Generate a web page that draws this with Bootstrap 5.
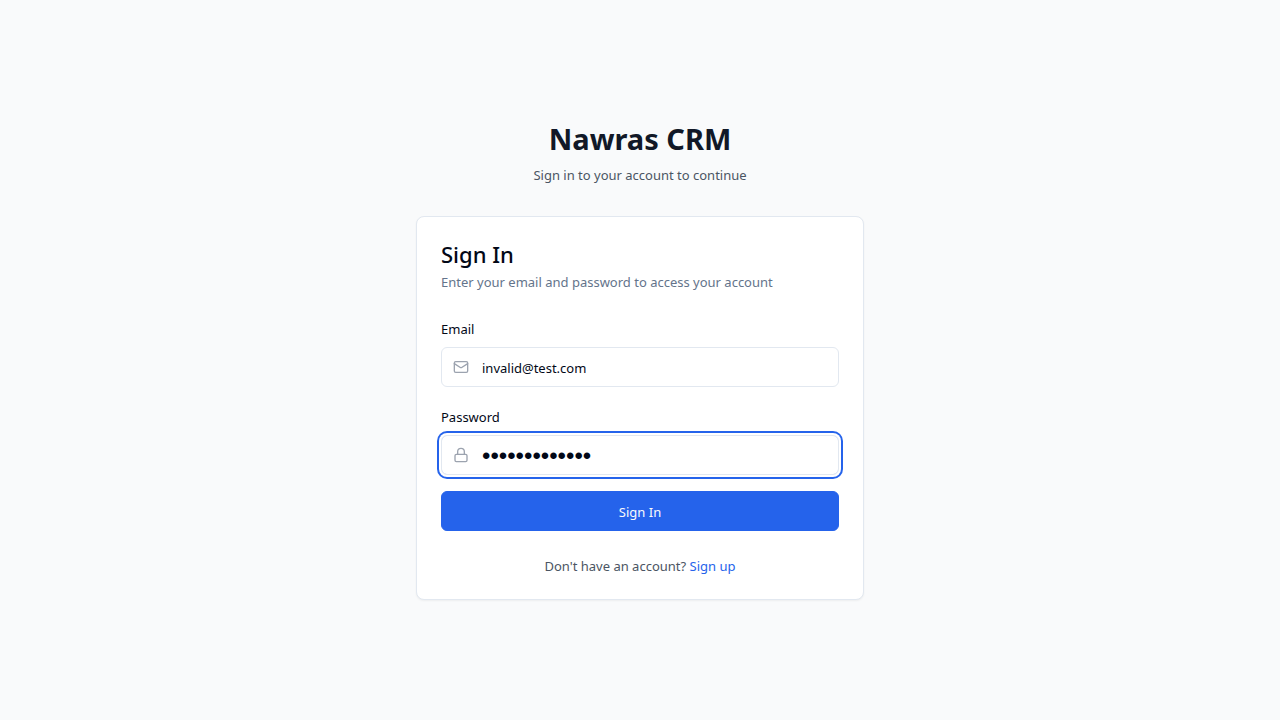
<!DOCTYPE html>
<html lang="en">
<head>
<meta charset="utf-8">
<meta name="viewport" content="width=device-width, initial-scale=1">
<title>Nawras CRM</title>
<link href="https://cdn.jsdelivr.net/npm/bootstrap@5.3.0/dist/css/bootstrap.min.css" rel="stylesheet">
<style>
body{background:#f9fafb;color:#020817;font:13px/20px "Noto Sans",sans-serif}
.auth{max-width:448px}
.brand{font-size:29px;line-height:38px;font-weight:700;color:#111827;margin-bottom:7px}
.muted{color:#4b5563}
.intro{margin-bottom:31px}
.panel{border:1px solid #e2e8f0;border-radius:8px;box-shadow:0 1px 2px rgba(0,0,0,.05)}
.panel-title{font-size:22px;line-height:26px;font-weight:500;margin-bottom:5px}
.panel-text{color:#64748b;margin-bottom:23px}
.form-label{line-height:28px}
.form-control{height:40px;padding:9px 12px 8px 40px;font-size:13px;line-height:20px;color:#020817;border-color:#e2e8f0;border-radius:6px}
.form-control[type=password]{font:24px/20px "Liberation Sans",sans-serif}
.form-control:focus{color:#020817;border-color:#e2e8f0;box-shadow:0 0 0 2px #fff,0 0 0 4px #2563eb}
.field-icon{left:12px;width:16px;height:16px;top:12px;color:#9ca3af;z-index:2}
.btn-signin{height:40px;padding:9px 16px 7px;font-size:13px;line-height:22px;border-radius:6px;--bs-btn-color:#f8fafc;--bs-btn-bg:#2563eb;--bs-btn-border-color:#2563eb;--bs-btn-hover-color:#f8fafc;--bs-btn-hover-bg:#1d4ed8}
.signup{color:#2563eb}
.switch{line-height:22px;margin:24px 0 -2px}
</style>
</head>
<body class="min-vh-100 d-flex align-items-center justify-content-center">
<main class="auth w-100">
  <header class="text-center">
    <h1 class="brand">Nawras CRM</h1>
    <p class="muted intro">Sign in to your account to continue</p>
  </header>
  <section class="panel bg-white p-4">
    <h2 class="panel-title">Sign In</h2>
    <p class="panel-text">Enter your email and password to access your account</p>
    <form>
      <div class="mb-3">
        <label class="form-label d-block mb-1" for="email">Email</label>
        <div class="position-relative">
          <svg class="field-icon position-absolute" viewBox="0 0 24 24" fill="none" stroke="currentColor" stroke-width="2" stroke-linecap="round" stroke-linejoin="round" aria-hidden="true"><rect width="20" height="16" x="2" y="4" rx="2"/><path d="m22 7-8.97 5.7a1.94 1.94 0 0 1-2.06 0L2 7"/></svg>
          <input class="form-control" id="email" type="email" value="invalid@test.com">
        </div>
      </div>
      <div class="mb-3">
        <label class="form-label d-block mb-1" for="password">Password</label>
        <div class="position-relative">
          <svg class="field-icon position-absolute" viewBox="0 0 24 24" fill="none" stroke="currentColor" stroke-width="2" stroke-linecap="round" stroke-linejoin="round" aria-hidden="true"><rect width="18" height="11" x="3" y="11" rx="2" ry="2"/><path d="M7 11V7a5 5 0 0 1 10 0v4"/></svg>
          <input class="form-control" id="password" type="password" value="wrongpassword" autofocus>
        </div>
      </div>
      <button class="btn btn-signin w-100" type="submit">Sign In</button>
    </form>
    <p class="muted switch text-center">Don't have an account? <a class="signup text-decoration-none" href="#">Sign up</a></p>
  </section>
</main>
<script src="https://cdn.jsdelivr.net/npm/bootstrap@5.3.0/dist/js/bootstrap.bundle.min.js"></script>
</body>
</html>
